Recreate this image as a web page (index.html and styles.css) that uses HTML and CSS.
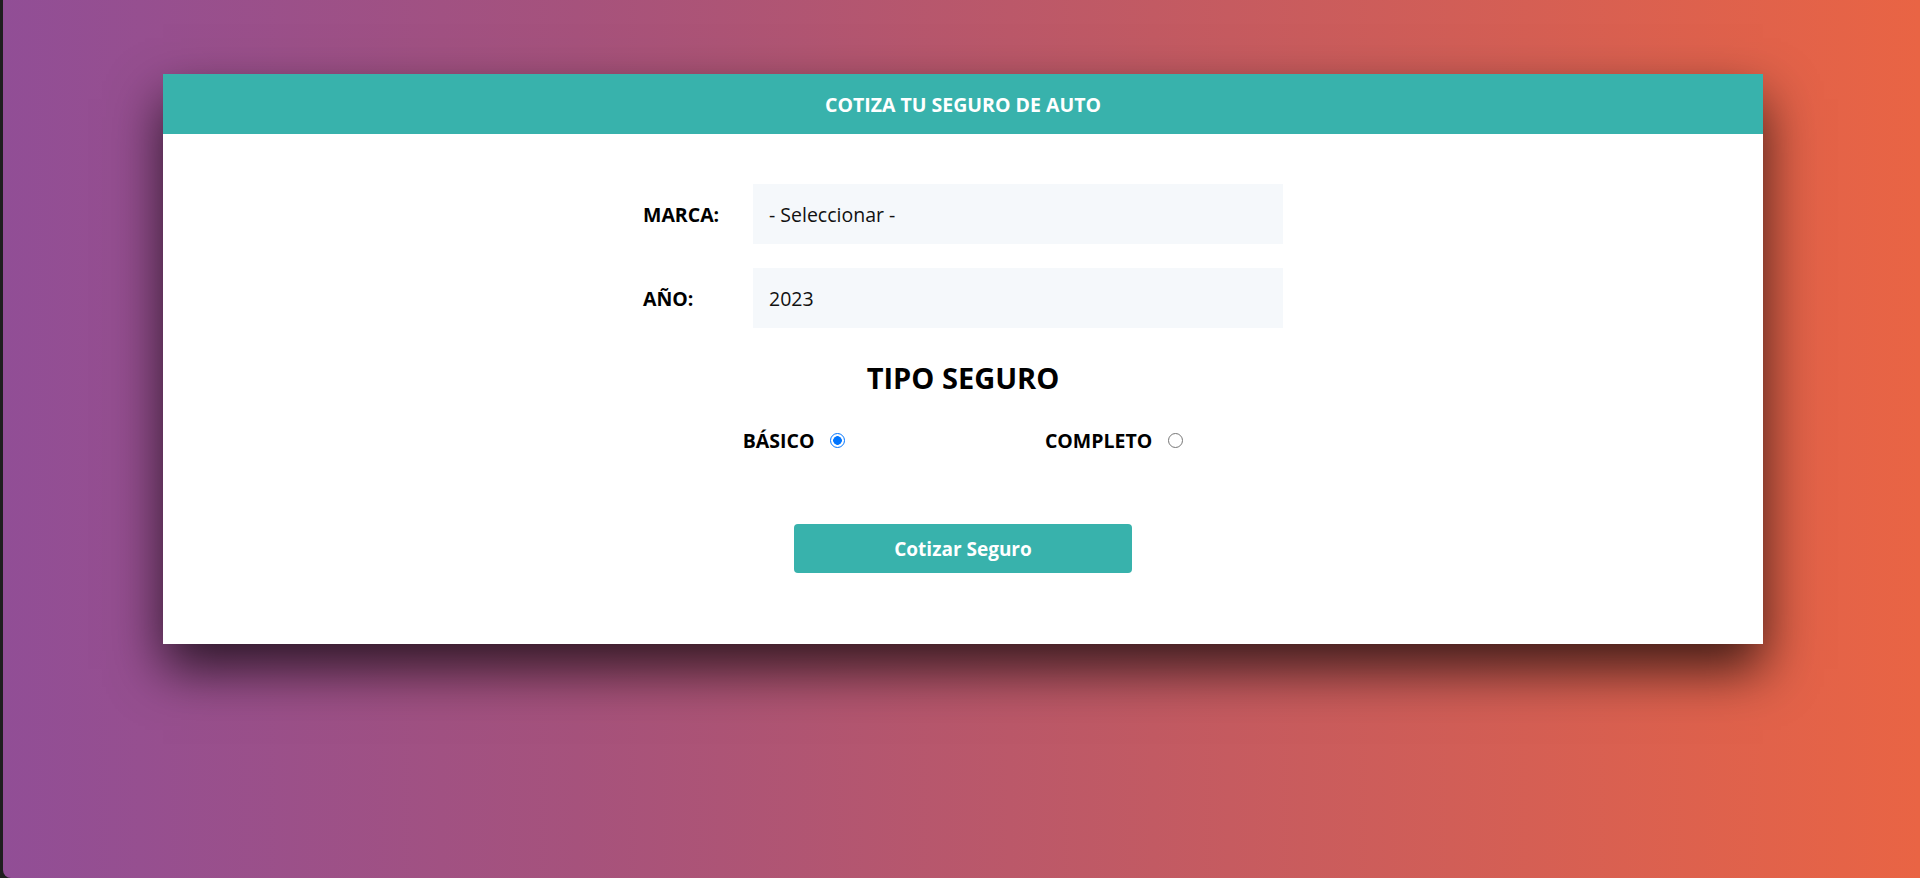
FILE: index.html
```html
<!DOCTYPE html>
<html lang="es">
<head>
<meta charset="utf-8">
<title>Cotizador</title>
<link rel="stylesheet" href="styles.css">
</head>
<body>
<div class="page">
  <div class="card">
    <header class="card-header">
      <h1 class="title">COTIZA TU SEGURO DE AUTO</h1>
    </header>
    <form class="form">
      <div class="field">
        <label class="label" for="marca">MARCA:</label>
        <div class="control">- Seleccionar -</div>
      </div>
      <div class="field">
        <label class="label" for="year">AÑO:</label>
        <div class="control">2023</div>
      </div>
      <h2 class="subtitle">TIPO SEGURO</h2>
      <div class="radios">
        <label class="radio-item">BÁSICO <span class="radio checked"></span></label>
        <label class="radio-item">COMPLETO <span class="radio"></span></label>
      </div>
      <div class="actions">
        <button type="button" class="btn">Cotizar Seguro</button>
      </div>
    </form>
  </div>
</div>
</body>
</html>
```

FILE: styles.css
```css
* { box-sizing: border-box; }
html, body { margin: 0; padding: 0; }
body {
  height: 878px;
  overflow: hidden;
  background: #1e1e1e;
  font-family: "Open Sans", "Noto Sans", sans-serif;
}
.page {
  height: 878px;
  margin-left: 3px;
  padding-left: 3px;
  padding-top: 74px;
  background: linear-gradient(to right, #914e96 0%, #a6527c 30%, #c25a63 60%, #e96444 100%);
  border-bottom-left-radius: 8px;
}
.card {
  width: 1600px;
  margin: 0 auto;
  background: #fff;
  box-shadow: 0 25px 50px rgba(0, 0, 0, 0.72);
}
.card-header {
  background: #38b2ac;
  height: 60px;
  display: flex;
  align-items: center;
  justify-content: center;
}
.title {
  margin: 0;
  color: #fff;
  font-size: 19.5px;
  font-weight: 700;
}
.form {
  width: 640px;
  margin: 0 auto;
  padding: 50px 0 71px;
}
.field {
  display: flex;
  align-items: center;
  margin-bottom: 24px;
}
.label {
  width: 110px;
  font-weight: 700;
  font-size: 19.5px;
  color: #000;
}
.control {
  flex: 1;
  height: 60px;
  background: #f5f8fb;
  display: flex;
  align-items: center;
  padding-left: 16px;
  font-size: 19.5px;
  color: #111;
}
.subtitle {
  margin: 30px 0 0;
  text-align: center;
  font-size: 29px;
  font-weight: 700;
  color: #000;
  line-height: 40px;
}
.radios {
  display: flex;
  justify-content: space-around;
  align-items: center;
  margin-top: 30px;
  height: 24px;
}
.radio-item {
  display: flex;
  align-items: center;
  gap: 16px;
  font-weight: 700;
  font-size: 19.5px;
  color: #000;
}
.radio {
  width: 15px;
  height: 15px;
  border-radius: 50%;
  border: 1px solid #767676;
  background: #fff;
  display: inline-block;
}
.radio.checked {
  border: 1.5px solid #0075ff;
  background: radial-gradient(circle, #0075ff 0 4px, #fff 4.6px);
}
.actions {
  display: flex;
  justify-content: center;
  margin-top: 72px;
}
.btn {
  width: 338px;
  height: 49px;
  border: none;
  border-radius: 4px;
  background: #38b2ac;
  color: #fff;
  font-family: inherit;
  font-weight: 700;
  font-size: 19px;
}
```
